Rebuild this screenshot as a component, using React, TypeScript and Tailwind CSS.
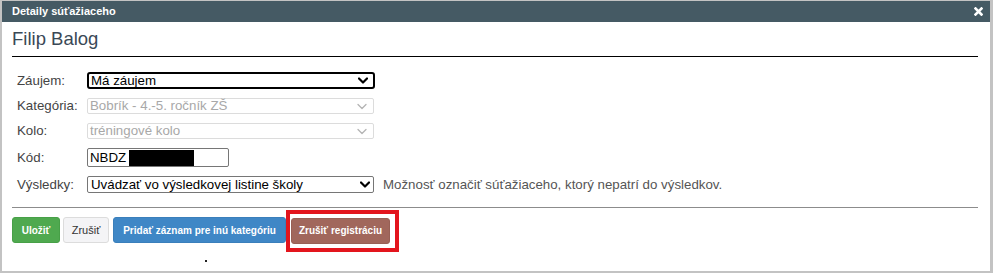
import type { ReactNode } from "react";

function Chevron({ dark }: { dark?: boolean }) {
  return (
    <svg width="10" height="7" viewBox="0 0 10 7" className="shrink-0">
      <polyline
        points="1,1.5 5,5.5 9,1.5"
        fill="none"
        stroke={dark ? "#000" : "#b4b4b4"}
        strokeWidth={dark ? 2.2 : 1.3}
        strokeLinecap="round"
        strokeLinejoin="round"
      />
    </svg>
  );
}

function Row({ label, children, className = "" }: { label: string; children: ReactNode; className?: string }) {
  return (
    <div className={`flex items-center ${className}`}>
      <span className="w-[75px] shrink-0 pl-[5px] text-[13.3px] leading-none text-[#444]">{label}</span>
      {children}
    </div>
  );
}

function FakeSelect({
  value,
  variant,
}: {
  value: string;
  variant: "focus" | "disabled" | "normal";
}) {
  const box =
    variant === "focus"
      ? "h-[17px] w-[288px] border-2 border-black rounded-[3px] pl-[2px] pr-[5px] text-black"
      : variant === "disabled"
        ? "h-[16px] w-[287px] border border-[#dcdcdc] rounded-[2px] pl-[2px] pr-[6px] text-[#a8a8a8]"
        : "h-[17px] w-[287px] border border-[#767676] rounded-[2px] pl-[3px] pr-[3px] text-black";
  return (
    <div className={`flex shrink-0 items-center justify-between bg-white ${box}`}>
      <span className="text-[13.3px] leading-none">{value}</span>
      <Chevron dark={variant !== "disabled"} />
    </div>
  );
}

export default function App() {
  return (
    <div className="w-[993px] h-[273px] bg-[#c3c3c3] pl-[2px] pt-px pr-[3px] pb-[2px] font-['Liberation_Sans',Arial,sans-serif]">
      <div className="h-full bg-white flex flex-col">
        <div className="h-[21px] bg-[#455a64] flex items-center justify-between pl-[10px] pr-[7px]">
          <span className="text-[11px] font-bold text-white leading-none">Detaily súťažiaceho</span>
          <svg width="9" height="9" viewBox="0 0 9 9">
            <path d="M1.5 1.5 L7.5 7.5 M7.5 1.5 L1.5 7.5" stroke="#fff" strokeWidth="2.6" strokeLinecap="square" />
          </svg>
        </div>

        <div className="pl-[10px] pr-[12px] flex flex-col">
          <div className="mt-[6px] pb-[6px] border-b border-black">
            <h1 className="text-[18.5px] leading-[22px] text-[#3a4856]">Filip Balog</h1>
          </div>

          <Row label="Záujem:" className="mt-[15px]">
            <FakeSelect value="Má záujem" variant="focus" />
          </Row>
          <Row label="Kategória:" className="mt-[9px]">
            <FakeSelect value="Bobrík - 4.-5. ročník ZŠ" variant="disabled" />
          </Row>
          <Row label="Kolo:" className="mt-[9px]">
            <FakeSelect value="tréningové kolo" variant="disabled" />
          </Row>
          <Row label="Kód:" className="mt-[9px]">
            <div className="h-[19px] w-[142px] border border-[#767676] rounded-[2px] flex items-center pl-[2px]">
              <span className="text-[13.3px] leading-none text-black">NBDZ</span>
              <span className="ml-[3px] h-[16px] w-[65px] bg-black" />
            </div>
          </Row>
          <Row label="Výsledky:" className="mt-[9px]">
            <FakeSelect value="Uvádzať vo výsledkovej listine školy" variant="normal" />
            <span className="ml-[9px] text-[13.3px] leading-none text-[#555]">
              Možnosť označiť súťažiaceho, ktorý nepatrí do výsledkov.
            </span>
          </Row>

          <div className="mt-[14px] border-t border-[#8c8c8c]" />

          <div className="mt-[9px] flex items-center">
            <button className="h-[26px] w-[48px] rounded-[3px] bg-[#4fa94f] border border-[#47a047] text-white text-[10px] font-bold">
              Uložiť
            </button>
            <button className="ml-[3px] h-[26px] w-[46px] rounded-[3px] bg-[#f4f4f6] border border-[#dcdcdc] text-[#333] text-[11px]">
              Zrušiť
            </button>
            <button className="ml-[4px] h-[26px] w-[173px] rounded-[3px] bg-[#3f87c6] border border-[#3a7fbb] text-white text-[10px] font-bold">
              Pridať záznam pre inú kategóriu
            </button>
            <div className="relative ml-[5px]">
              <button className="h-[26px] w-[99px] rounded-[3px] bg-[#a1675c] border border-[#976055] text-white text-[10px] font-bold">
                Zrušiť registráciu
              </button>
              <div className="absolute left-[-5px] top-[-7px] w-[113px] h-[42px] border-4 border-[#e3151d]" />
            </div>
          </div>

          <div className="mt-[16px] ml-[193px] h-[2px] w-[2px] bg-[#222]" />
        </div>
      </div>
    </div>
  );
}
